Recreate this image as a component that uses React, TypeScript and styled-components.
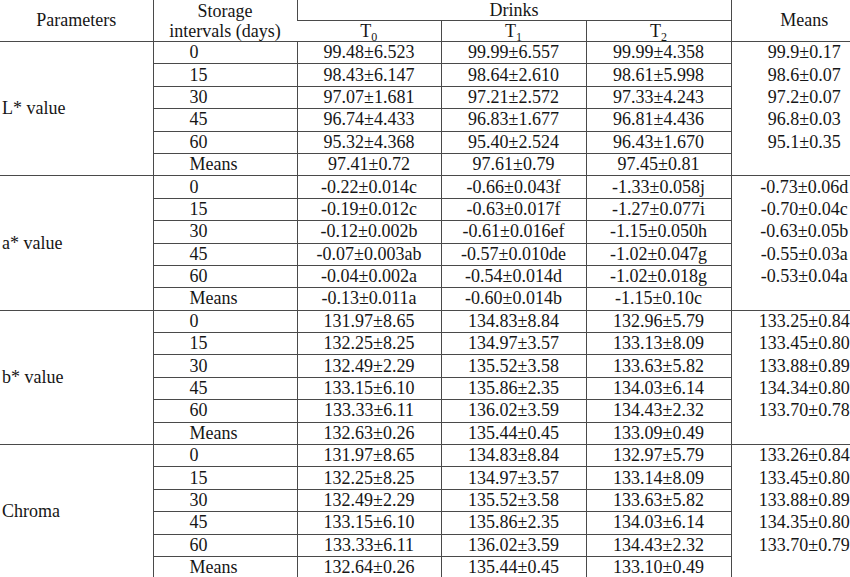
import React from "react";
import styled, { createGlobalStyle } from "styled-components";

const GlobalStyle = createGlobalStyle`
  html, body {
    margin: 0;
    padding: 0;
    background: #ffffff;
    overflow: hidden;
  }
  body {
    font-family: "Liberation Serif", "Times New Roman", serif;
    color: #111;
  }
`;

const Page = styled.div`
  width: 850px;
  height: 577px;
  overflow: hidden;
`;

const Table = styled.table`
  border-collapse: collapse;
  table-layout: fixed;
  width: 877px;
  font-family: "Liberation Serif", "Times New Roman", serif;
  font-size: 18px;
  line-height: 19px;
  color: #161616;
`;

const Col = styled.col<{ $w: number }>`
  width: ${({ $w }) => $w}px;
`;

const HeadCell = styled.th<{ $h: number }>`
  font-weight: normal;
  text-align: center;
  vertical-align: middle;
  height: ${({ $h }) => $h}px;
  padding: 0;
  border-left: 1.5px solid #4a4a4a;
  border-bottom: 1.5px solid #4a4a4a;
  &:first-child {
    border-left: none;
  }
`;

const TwoLine = styled.span`
  display: block;
  line-height: 20px;
`;

const Sub = styled.sub`
  font-size: 12px;
  vertical-align: -4px;
  line-height: 0;
`;

const ParamCell = styled.td`
  padding: 0 0 0 2px;
  text-align: left;
  vertical-align: middle;
  border-bottom: 1.5px solid #4a4a4a;
`;

const IntervalCell = styled.td`
  padding: 0 0 0 36px;
  text-align: left;
  height: 21.4px;
  border-left: 1.5px solid #4a4a4a;
  border-bottom: 1.5px solid #4a4a4a;
`;

const ValueCell = styled.td`
  padding: 0;
  text-align: center;
  border-left: 1.5px solid #4a4a4a;
  border-bottom: 1.5px solid #4a4a4a;
`;

const MeanCell = styled.td<{ $last: boolean }>`
  padding: 0;
  text-align: center;
  border-left: 1.5px solid #4a4a4a;
  border-bottom: ${({ $last }) => ($last ? "1.5px solid #4a4a4a" : "none")};
`;

type Group = {
  name: string;
  rows: string[][];
  totals: string[];
};

const intervals = ["0", "15", "30", "45", "60"];

const groups: Group[] = [
  {
    name: "L* value",
    rows: [
      ["99.48±6.523", "99.99±6.557", "99.99±4.358", "99.9±0.17"],
      ["98.43±6.147", "98.64±2.610", "98.61±5.998", "98.6±0.07"],
      ["97.07±1.681", "97.21±2.572", "97.33±4.243", "97.2±0.07"],
      ["96.74±4.433", "96.83±1.677", "96.81±4.436", "96.8±0.03"],
      ["95.32±4.368", "95.40±2.524", "96.43±1.670", "95.1±0.35"],
    ],
    totals: ["97.41±0.72", "97.61±0.79", "97.45±0.81"],
  },
  {
    name: "a* value",
    rows: [
      ["-0.22±0.014c", "-0.66±0.043f", "-1.33±0.058j", "-0.73±0.06d"],
      ["-0.19±0.012c", "-0.63±0.017f", "-1.27±0.077i", "-0.70±0.04c"],
      ["-0.12±0.002b", "-0.61±0.016ef", "-1.15±0.050h", "-0.63±0.05b"],
      ["-0.07±0.003ab", "-0.57±0.010de", "-1.02±0.047g", "-0.55±0.03a"],
      ["-0.04±0.002a", "-0.54±0.014d", "-1.02±0.018g", "-0.53±0.04a"],
    ],
    totals: ["-0.13±0.011a", "-0.60±0.014b", "-1.15±0.10c"],
  },
  {
    name: "b* value",
    rows: [
      ["131.97±8.65", "134.83±8.84", "132.96±5.79", "133.25±0.84"],
      ["132.25±8.25", "134.97±3.57", "133.13±8.09", "133.45±0.80"],
      ["132.49±2.29", "135.52±3.58", "133.63±5.82", "133.88±0.89"],
      ["133.15±6.10", "135.86±2.35", "134.03±6.14", "134.34±0.80"],
      ["133.33±6.11", "136.02±3.59", "134.43±2.32", "133.70±0.78"],
    ],
    totals: ["132.63±0.26", "135.44±0.45", "133.09±0.49"],
  },
  {
    name: "Chroma",
    rows: [
      ["131.97±8.65", "134.83±8.84", "132.97±5.79", "133.26±0.84"],
      ["132.25±8.25", "134.97±3.57", "133.14±8.09", "133.45±0.80"],
      ["132.49±2.29", "135.52±3.58", "133.63±5.82", "133.88±0.89"],
      ["133.15±6.10", "135.86±2.35", "134.03±6.14", "134.35±0.80"],
      ["133.33±6.11", "136.02±3.59", "134.43±2.32", "133.70±0.79"],
    ],
    totals: ["132.64±0.26", "135.44±0.45", "133.10±0.49"],
  },
];

function DataGroup({ group }: { group: Group }) {
  return (
    <>
      {group.rows.map((row, i) => (
        <tr key={i}>
          {i === 0 && <ParamCell rowSpan={6}>{group.name}</ParamCell>}
          <IntervalCell>{intervals[i]}</IntervalCell>
          <ValueCell>{row[0]}</ValueCell>
          <ValueCell>{row[1]}</ValueCell>
          <ValueCell>{row[2]}</ValueCell>
          <MeanCell $last={false}>{row[3]}</MeanCell>
        </tr>
      ))}
      <tr>
        <IntervalCell>Means</IntervalCell>
        <ValueCell>{group.totals[0]}</ValueCell>
        <ValueCell>{group.totals[1]}</ValueCell>
        <ValueCell>{group.totals[2]}</ValueCell>
        <MeanCell $last={true} />
      </tr>
    </>
  );
}

export default function App() {
  return (
    <Page>
      <GlobalStyle />
      <Table>
        <colgroup>
          <Col $w={153} />
          <Col $w={144} />
          <Col $w={144} />
          <Col $w={145} />
          <Col $w={145} />
          <Col $w={146} />
        </colgroup>
        <thead>
          <tr>
            <HeadCell $h={20} rowSpan={2}>Parameters</HeadCell>
            <HeadCell $h={20} rowSpan={2}>
              <TwoLine>
                Storage
                <br />
                intervals (days)
              </TwoLine>
            </HeadCell>
            <HeadCell $h={20} colSpan={3}>Drinks</HeadCell>
            <HeadCell $h={20} rowSpan={2}>Means</HeadCell>
          </tr>
          <tr>
            <HeadCell $h={20}>
              T<Sub>0</Sub>
            </HeadCell>
            <HeadCell $h={20}>
              T<Sub>1</Sub>
            </HeadCell>
            <HeadCell $h={20}>
              T<Sub>2</Sub>
            </HeadCell>
          </tr>
        </thead>
        <tbody>
          {groups.map((g) => (
            <DataGroup key={g.name} group={g} />
          ))}
        </tbody>
      </Table>
    </Page>
  );
}
